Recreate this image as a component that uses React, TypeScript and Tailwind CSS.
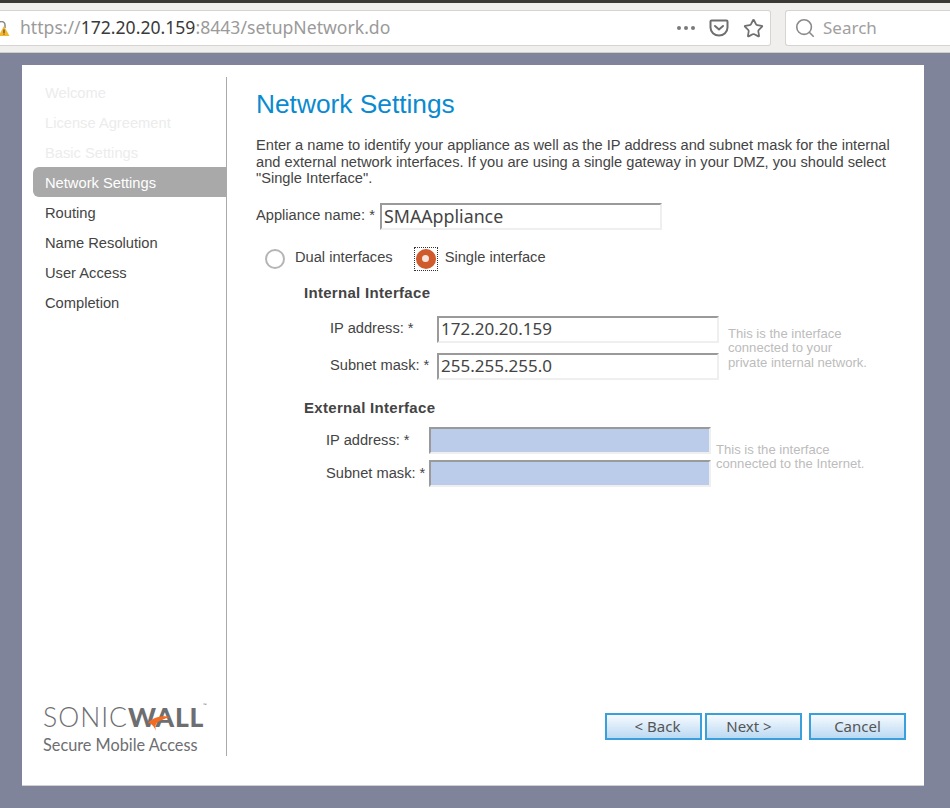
import { Search, Star } from "lucide-react";

const steps = [
  { name: "Welcome", state: "done" },
  { name: "License Agreement", state: "done" },
  { name: "Basic Settings", state: "done" },
  { name: "Network Settings", state: "active" },
  { name: "Routing", state: "todo" },
  { name: "Name Resolution", state: "todo" },
  { name: "User Access", state: "todo" },
  { name: "Completion", state: "todo" },
];

const Toolbar = () => (
  <div className="h-[53px] shrink-0 bg-[#f0efee] border-b border-[#cfcdc9] border-t-[3px] border-t-[#3a3935] pt-[7px] flex items-start font-['Noto_Sans',sans-serif]">
    <div className="w-[771px] h-[36px] bg-white border border-[#d6d4d0] border-l-0 rounded-r-[3px] flex items-center">
      <svg width="10" height="16" viewBox="0 0 10 16" className="shrink-0 mt-[1px]">
        <path d="M-2 7V4a3 3 0 0 1 7 0v3" fill="none" stroke="#888" strokeWidth="1.5" />
        <path d="M4 5 9.5 15H-1.5Z" fill="#f2b632" />
        <rect x="3.5" y="8.5" width="1" height="3.5" fill="#333" />
        <rect x="3.5" y="12.6" width="1" height="1" fill="#333" />
      </svg>
      <div className="ml-[10px] text-[17.6px] leading-none text-[#9a9a9a] whitespace-nowrap">
        https://<span className="text-[#3a3a3a]">172.20.20.159</span>:8443/setupNetwork.do
      </div>
      <div className="ml-auto flex items-center">
        <svg width="20" height="6" viewBox="0 0 20 6">
          <circle cx="3" cy="3" r="2" fill="#7a7a7a" />
          <circle cx="10" cy="3" r="2" fill="#7a7a7a" />
          <circle cx="17" cy="3" r="2" fill="#7a7a7a" />
        </svg>
        <svg width="20" height="18" viewBox="0 0 20 18" className="ml-[13px]">
          <path d="M1.5 2.5a1 1 0 0 1 1-1h15a1 1 0 0 1 1 1v6a8.5 8 0 0 1-17 0Z" fill="none" stroke="#6f6f6f" strokeWidth="2" />
          <path d="M6 7l4 3.5L14 7" fill="none" stroke="#6f6f6f" strokeWidth="2" strokeLinecap="round" />
        </svg>
        <Star size={21} strokeWidth={2} color="#6f6f6f" className="ml-[14px] mr-[6px]" />
      </div>
    </div>
    <div className="ml-[14px] flex-1 h-[36px] bg-white border border-[#d6d4d0] border-r-0 rounded-l-[3px] flex items-center pl-[8px]">
      <Search size={22} strokeWidth={1.75} color="#8a8a8a" />
      <span className="ml-[7px] text-[17px] text-[#a0a0a0]">Search</span>
    </div>
  </div>
);

const Sidebar = () => (
  <div className="w-[194px] shrink-0 border-r border-[#aaaaaa] flex flex-col text-[14.7px]">
    {steps.map((step) => (
      <div
        key={step.name}
        className={
          step.state === "active"
            ? "h-[30px] flex items-center pl-[12px] pt-[2px] bg-[#a9a9a9] text-white rounded-l-[6px]"
            : step.state === "done"
              ? "h-[30px] flex items-center pl-[12px] pt-[2px] text-[#ececec]"
              : "h-[30px] flex items-center pl-[12px] pt-[2px] text-[#444444]"
        }
      >
        {step.name}
      </div>
    ))}
    <div className="mt-auto pl-[10px] pb-[1px]">
      <div className="relative w-[165px] h-[30px] leading-[30px] text-[26.5px] text-[#6d6e71] whitespace-nowrap font-['Lato',sans-serif]">
        <span className="font-light tracking-[1px]">SONIC</span>
        <span className="font-black tracking-[0.8px]">WALL</span>
        <span className="absolute left-[160px] top-[-1px] text-[5px] leading-[8px] font-normal">™</span>
        <svg width="24" height="16" viewBox="0 0 24 16" className="absolute left-[104px] top-[14px]">
          <path d="M23 1C15 -1 5 2 1 7c3 0 6 3 8 8-1-4-1-7 2-9 3-2 8-4 12-5Z" fill="#f26b21" />
        </svg>
      </div>
      <div className="text-[16.3px] leading-[20px] mt-[3px] text-[#6d6e71] whitespace-nowrap font-['Lato',sans-serif]">
        Secure Mobile Access
      </div>
    </div>
  </div>
);

const Field = ({ value, blue, large }: { value?: string; blue?: boolean; large?: boolean }) => (
  <div
    className={`w-[282px] h-[27px] shrink-0 border-2 border-t-[#9a9a9a] border-l-[#9a9a9a] border-r-[#efefef] border-b-[#efefef] flex items-center pl-[2px] text-[#444444] font-['Noto_Sans',sans-serif] ${large ? "text-[17.8px]" : "text-[17px]"} ${blue ? "bg-[#bbcceb]" : "bg-white"}`}
  >
    {value}
  </div>
);

const Hint = ({ lines, className }: { lines: string[]; className: string }) => (
  <div className={`text-[13.1px] leading-[14.5px] text-[#bcbcbc] whitespace-nowrap ${className}`}>
    {lines.map((line) => (
      <div key={line}>{line}</div>
    ))}
  </div>
);

const WizardButton = ({ label, className = "" }: { label: string; className?: string }) => (
  <button
    className={`w-[97px] h-[27px] border-2 border-[#3aa0dc] bg-gradient-to-b from-[#f6fbff] to-[#bcd9f2] text-[15px] text-[#555555] font-['Noto_Sans',sans-serif] leading-none ${className}`}
  >
    {label}
  </button>
);

const Heading = ({ children, className }: { children: string; className: string }) => (
  <div className={`ml-[47px] font-bold text-[15px] tracking-[0.3px] leading-[18px] ${className}`}>{children}</div>
);

const Main = () => (
  <div className="flex-1 flex flex-col pl-[30px] text-[14.65px] text-[#444444]">
    <h1 className="text-[26.3px] leading-[30px] text-[#0a8ad0] mt-[12px] -ml-[1px]">Network Settings</h1>
    <p className="mt-[18px] leading-[16.5px] w-[640px] -ml-[1px]">
      Enter a name to identify your appliance as well as the IP address and subnet mask for the internal
      and external network interfaces. If you are using a single gateway in your DMZ, you should select
      "Single Interface".
    </p>

    <div className="flex items-center mt-[16px]">
      <span className="w-[124px] -ml-[1px] whitespace-nowrap">Appliance name: *</span>
      <Field value="SMAAppliance" large />
    </div>

    <div className="flex items-center mt-[17px] h-[24px] pl-[8px]">
      <span className="w-[20px] h-[20px] rounded-full border-2 border-[#b5b5b5] bg-white shrink-0" />
      <span className="ml-[10px] -mt-[2px]">Dual interfaces</span>
      <span className="ml-[21px] w-[24px] h-[24px] border border-dotted border-[#333333] flex items-center justify-center shrink-0">
        <span className="w-[20px] h-[20px] rounded-full bg-[#cf5a2c] flex items-center justify-center">
          <span className="w-[7px] h-[7px] rounded-full bg-[#f6e4da]" />
        </span>
      </span>
      <span className="ml-[7px] -mt-[2px]">Single interface</span>
    </div>

    <Heading className="mt-[13px]">Internal Interface</Heading>

    <div className="flex items-start mt-[14px]">
      <div className="w-[180px] shrink-0">
        <div className="h-[27px] flex items-center pl-[73px] pt-[2px] -mt-[1px] mb-[1px]">IP address: *</div>
        <div className="h-[27px] mt-[10px] flex items-center pl-[73px] pt-[2px]">Subnet mask: *</div>
      </div>
      <div className="flex flex-col gap-[10px]">
        <Field value="172.20.20.159" />
        <Field value="255.255.255.0" />
      </div>
      <Hint lines={["This is the interface", "connected to your", "private internal network."]} className="ml-[9px] mt-[11px]" />
    </div>

    <Heading className="mt-[19px]">External Interface</Heading>

    <div className="flex items-start mt-[10px]">
      <div className="w-[172px] shrink-0">
        <div className="h-[27px] flex items-center pl-[69px] pt-[2px]">IP address: *</div>
        <div className="h-[27px] mt-[6px] flex items-center pl-[69px] pt-[2px]">Subnet mask: *</div>
      </div>
      <div className="flex flex-col gap-[6px]">
        <Field blue />
        <Field blue />
      </div>
      <Hint lines={["This is the interface", "connected to the Internet."]} className="ml-[5px] mt-[16px]" />
    </div>

    <div className="mt-auto mb-[16px] flex pl-[348px]">
      <WizardButton label="< Back" className="pl-[8px]" />
      <WizardButton label="Next >" className="ml-[3px] pr-[9px]" />
      <WizardButton label="Cancel" className="ml-[7px]" />
    </div>
  </div>
);

export default function App() {
  return (
    <div className="w-[950px] h-[808px] overflow-hidden flex flex-col bg-[#80849a] font-['Liberation_Sans',sans-serif]">
      <Toolbar />
      <div className="flex-1 pt-[12px] pl-[22px]">
        <div className="w-[902px] h-[721px] bg-white border-b border-[#d0d0d0] pt-[12px] pb-[29px] pl-[11px] flex">
          <Sidebar />
          <Main />
        </div>
      </div>
    </div>
  );
}
